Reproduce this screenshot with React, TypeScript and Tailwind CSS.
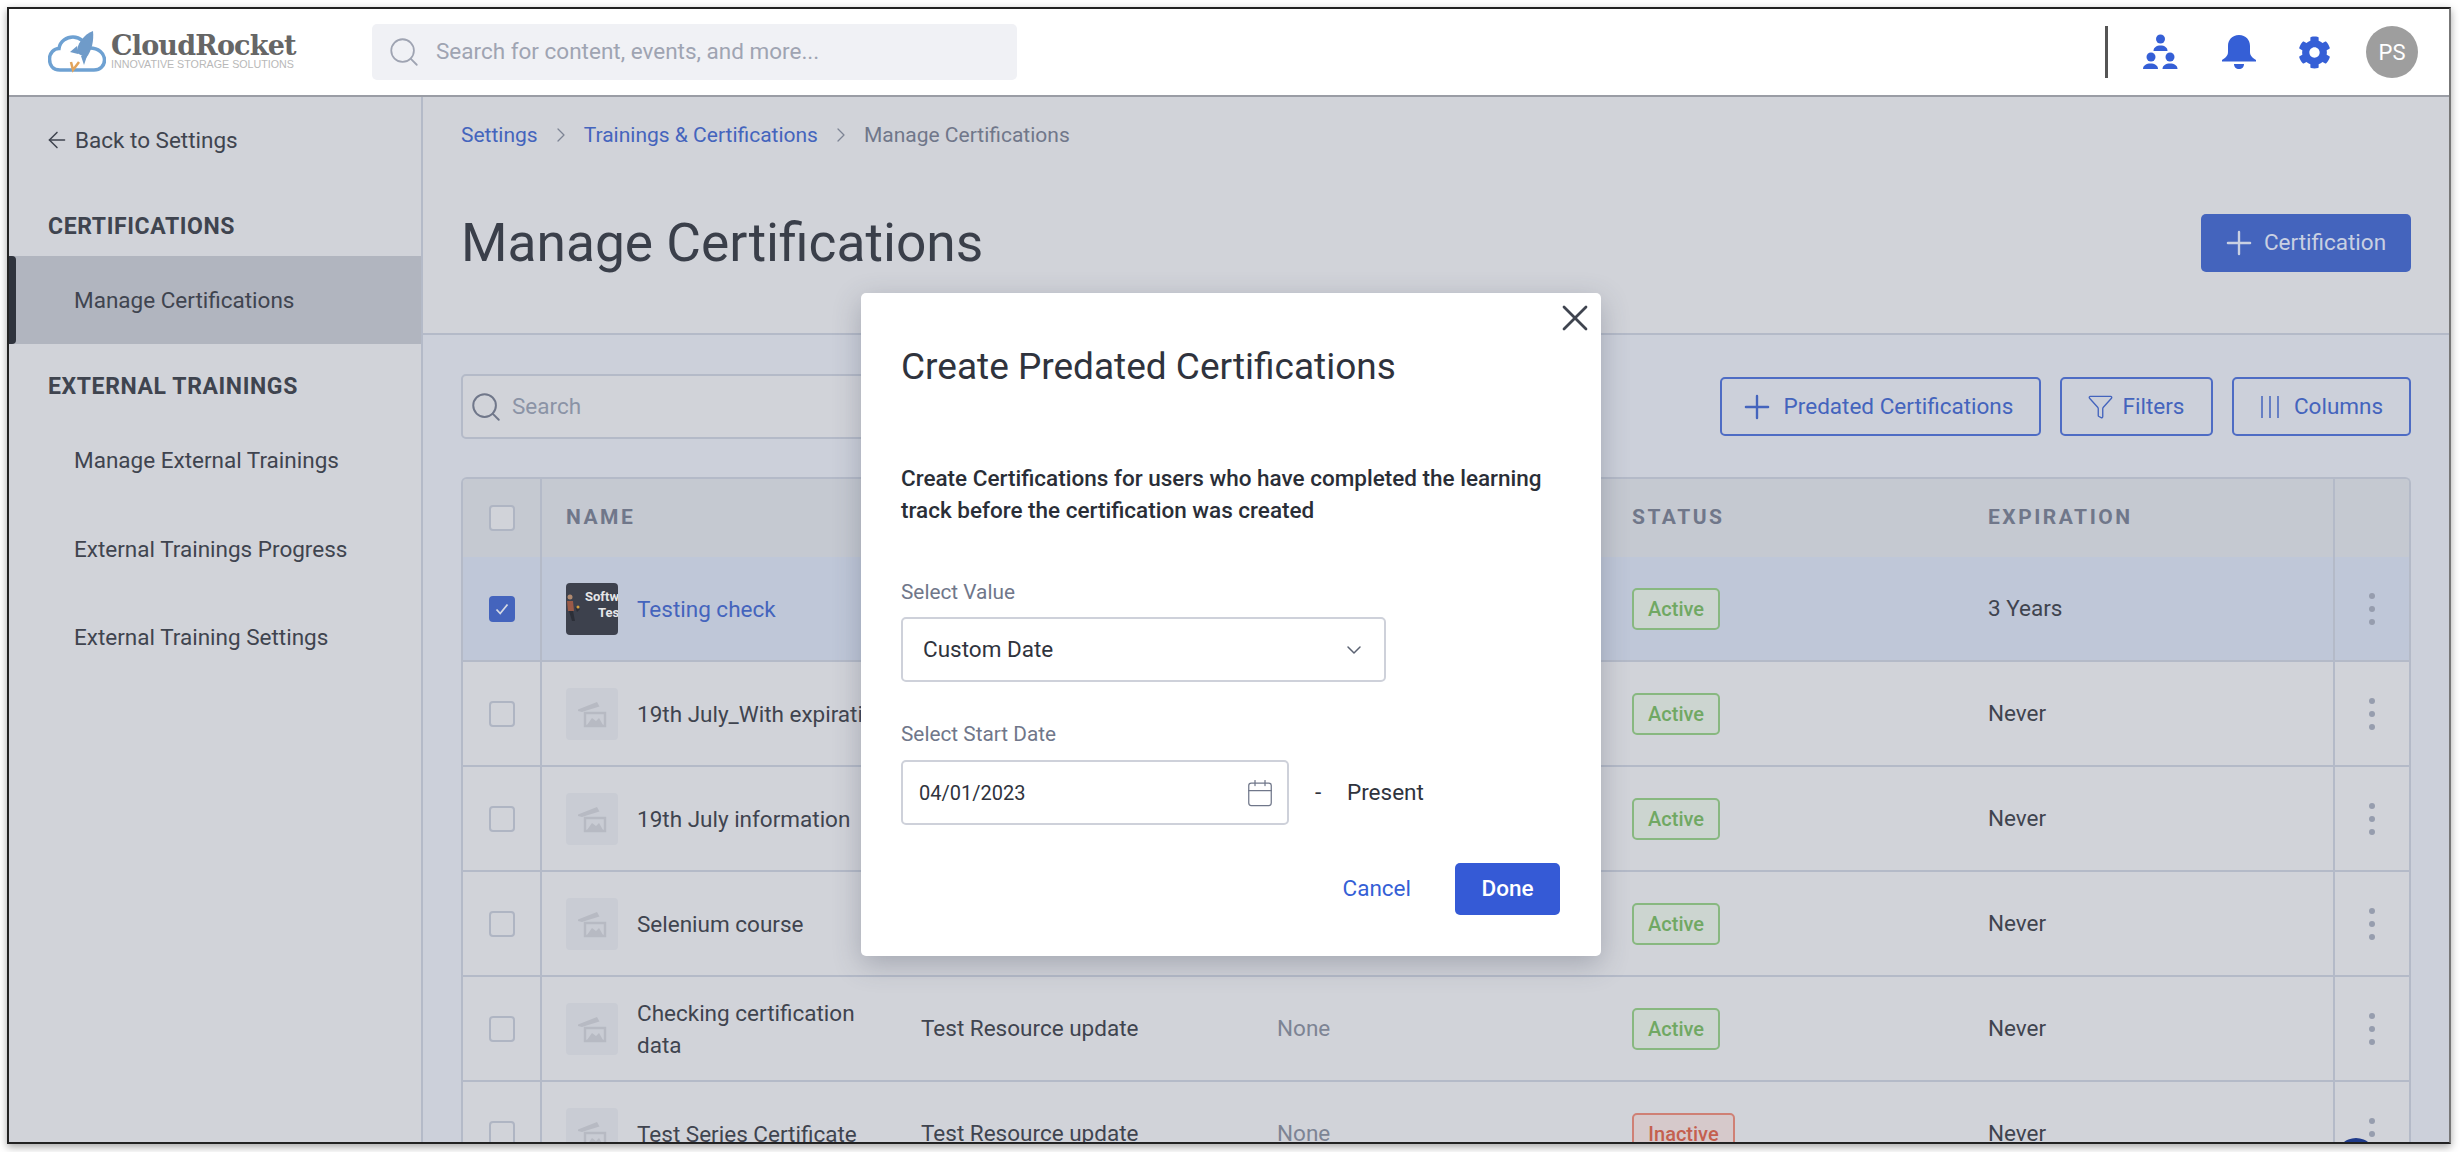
import { ArrowLeft, Calendar, ChevronDown, ChevronRight, Filter, Plus, Search, X } from 'lucide-react';
import { FaCog } from 'react-icons/fa';

const font = 'font-["Roboto",sans-serif]';

const OrgIcon = () => (
    <svg viewBox="0 0 36 36" className="h-[36px] w-[36px] fill-[#355fd6]">
        <circle cx="17.500" cy="5" r="4.500" />
        <path d="M10.500 17c0-3.600 3-5.500 7-5.500s7 1.900 7 5.500z" />
        <circle cx="8" cy="23" r="4.500" />
        <path d="M0 35c0-3.600 3.400-5.500 7.500-5.500s7.500 1.900 7.500 5.500z" />
        <circle cx="27" cy="23" r="4.500" />
        <path d="M19.500 35c0-3.600 3.400-5.500 7.500-5.500s7.500 1.900 7.500 5.500z" />
    </svg>
);

const BellIcon = () => (
    <svg viewBox="0 0 36 36" className="ml-[42px] h-[36px] w-[36px] fill-[#355fd6]">
        <path d="M18 1C11 1 7 6 7 12v6c0 4-3 6-6 8v1.500h34V26c-3-2-6-4-6-8v-6C29 6 25 1 18 1z" />
        <path d="M13 30h10c0 3-2 5-5 5s-5-2-5-5z" />
    </svg>
);

const Logo = () => (
    <div className="flex items-center gap-[5px]">
        <svg viewBox="8 5 58 44" className="h-[44px] w-[58px]">
            <path
                d="M20 45C12 45 9.500 39 9.500 34 9.500 28 14 23.500 19 23.500 20 16 27 12 33 12c4 0 7 1.500 10 4M50 23c8 0 14.500 5 14.500 12 0 6-4.500 10-10.500 10H20"
                fill="none"
                stroke="#6ea1d2"
                strokeWidth="3.500"
            />
            <path d="M53 6c-9 3-17 14-16 22l9 5c6-7 8-18 7-27z" fill="#6f9bc9" />
            <path d="M37 21l-7 6 8 2zM47 31l-3 9-3-9z" fill="#6f9bc9" />
            <path d="M31 37l2 8 6-8" fill="none" stroke="#e2a45b" strokeWidth="2.500" />
        </svg>
        <div className="flex w-[187px] flex-col">
            <span className='font-["DejaVu_Serif",serif] text-[27px] leading-[24px] font-bold tracking-[-0.8px] whitespace-nowrap text-[#666666]'>
                CloudRocket
            </span>
            <span className='font-["Liberation_Sans",sans-serif] text-[10.7px] leading-[12px] whitespace-nowrap text-[#b8b8b8]'>
                INNOVATIVE STORAGE SOLUTIONS
            </span>
        </div>
    </div>
);

const Thumb = () => (
    <div className="relative h-[52px] w-[52px] shrink-0 overflow-hidden rounded-[4px] bg-[#3d414d] text-[13px] leading-[15px] font-bold text-[#e6e6e8]">
        <span className="absolute top-[6px] left-[19px]">Software</span>
        <span className="absolute top-[22px] left-[32px]">Testing</span>
        <svg viewBox="0 0 16 30" className="absolute top-[10px] left-[0px] h-[30px] w-[16px]">
            <circle cx="4" cy="4" r="2.500" fill="#b08a70" />
            <path d="M1 8h6l1 10H2z" fill="#9a5a48" />
            <path d="M3 18h4l2 10H6zM9 14l5 2-3 3z" fill="#2c2f38" />
            <circle cx="12" cy="14" r="1.500" fill="#d0a040" />
        </svg>
    </div>
);

const PlaceholderThumb = () => (
    <div className="flex h-[52px] w-[52px] shrink-0 items-center justify-center rounded-[4px] bg-[#c9ccd4]">
        <svg viewBox="0 0 30 28" className="h-[28px] w-[30px]">
            <path d="M1 9.500 20 2l2.500 4.500-13 4-4.500 1.500L1 11z" fill="#b7bac3" />
            <path d="M8 13h20v13H8z" fill="none" stroke="#b7bac3" strokeWidth="2.400" />
            <path d="M10 25l5-7 4 3 3-3 4 7z" fill="#b7bac3" />
        </svg>
    </div>
);

const Checkbox = ({ checked = false }: { checked?: boolean }) =>
    checked ? (
        <div className="flex h-[26px] w-[26px] items-center justify-center rounded-[4px] bg-[#4464bd]">
            <svg viewBox="0 0 16 16" className="h-[16px] w-[16px] fill-none stroke-[#d5d9e4] stroke-[1.8]">
                <path d="M2.500 8.500 6.200 12.500 13.500 3.500" />
            </svg>
        </div>
    ) : (
        <div className="h-[26px] w-[26px] rounded-[4px] border-2 border-[#afb5c3] bg-[#d1d3d9]" />
    );

const StatusBadge = ({ status }: { status: string }) => (
    <span
        className={
            status === 'Active'
                ? 'flex h-[42px] w-[88px] items-center justify-center rounded-[5px] border-2 border-[#88b880] bg-[#ccd5d0] text-[20px] font-medium text-[#70a863]'
                : 'flex h-[42px] w-[103px] items-center justify-center rounded-[5px] border-2 border-[#cf8075] bg-[#d6c9cb] text-[20px] font-medium text-[#c4604f]'
        }
    >
        {status}
    </span>
);

const Dots = () => (
    <div className="flex flex-col gap-[7px]">
        <span className="h-[6px] w-[6px] rounded-full bg-[#969dae]" />
        <span className="h-[6px] w-[6px] rounded-full bg-[#969dae]" />
        <span className="h-[6px] w-[6px] rounded-full bg-[#969dae]" />
    </div>
);

interface Row {
    name: string;
    resource?: string;
    other?: string;
    status: string;
    expiration: string;
}

const rows: Row[] = [
    { name: 'Testing check', status: 'Active', expiration: '3 Years' },
    { name: '19th July_With expiration', status: 'Active', expiration: 'Never' },
    { name: '19th July information', status: 'Active', expiration: 'Never' },
    { name: 'Selenium course', status: 'Active', expiration: 'Never' },
    { name: 'Checking certification\ndata', resource: 'Test Resource update', other: 'None', status: 'Active', expiration: 'Never' },
    { name: 'Test Series Certificate', resource: 'Test Resource update', other: 'None', status: 'Inactive', expiration: 'Never' },
];

const gridCols = 'grid grid-cols-[79px_379px_356px_355px_356px_345px_1fr]';

const TableRow = ({ row, selected }: { row: Row; selected: boolean }) => (
    <div className={`${gridCols} h-[105px] shrink-0 border-b-2 border-[#b4bac8] ${selected ? 'bg-[#bfc7d8]' : 'bg-[#d1d3d9]'}`}>
        <div className="flex items-center justify-center border-r-2 border-[#b4bac8]">
            <Checkbox checked={selected} />
        </div>
        <div className="flex min-w-0 items-center gap-[19px] pl-[24px]">
            {selected ? <Thumb /> : <PlaceholderThumb />}
            <span className={`text-[22.5px] leading-[32px] whitespace-pre ${selected ? 'text-[#4464bd]' : 'text-[#3f444f]'}`}>
                {row.name}
            </span>
        </div>
        <div className="flex items-center text-[22.5px] whitespace-nowrap text-[#3f444f]">{row.resource}</div>
        <div className="flex items-center text-[22.5px] text-[#7d8494]">{row.other}</div>
        <div className="flex items-center">
            <StatusBadge status={row.status} />
        </div>
        <div className="flex items-center text-[22.5px] text-[#3f444f]">{row.expiration}</div>
        <div className="flex items-center justify-center border-l-2 border-[#b4bac8]">
            <Dots />
        </div>
    </div>
);

const OutlineButton = ({ icon, label, width, gap }: { icon: React.ReactNode; label: string; width: string; gap: string }) => (
    <button className={`flex h-[59px] ${width} ${gap} items-center justify-center rounded-[5px] border-2 border-[#4e6cc4] text-[22.5px] text-[#4464bd]`}>
        {icon}
        {label}
    </button>
);

const Sidebar = () => (
    <aside className="flex w-[414px] shrink-0 flex-col border-r-2 border-[#b4bac8] bg-[#d1d3d9] text-[22.5px] leading-[32px] text-[#3f444f]">
        <div className="mt-[27px] flex items-center gap-[5px] pl-[35px]">
            <ArrowLeft size={26} strokeWidth={1.4} />
            <span>Back to Settings</span>
        </div>
        <div className="mt-[56px] pl-[39px] text-[23px] leading-[30px] font-bold tracking-[0.6px]">CERTIFICATIONS</div>
        <div className="relative mt-[14px] flex h-[88px] items-center bg-[#b1b5bf] pl-[65px]">
            <span className="absolute top-0 left-0 h-full w-[7px] rounded-r-[4px] bg-[#2f333d]" />
            Manage Certifications
        </div>
        <div className="mt-[28px] pl-[39px] text-[23px] leading-[30px] font-bold tracking-[0.6px]">EXTERNAL TRAININGS</div>
        <div className="mt-[42px] flex flex-col gap-[56.5px] pl-[65px]">
            <span>Manage External Trainings</span>
            <span>External Trainings Progress</span>
            <span>External Training Settings</span>
        </div>
    </aside>
);

const Modal = () => (
    <div className="absolute top-[284px] left-[852px] flex h-[663px] w-[740px] flex-col rounded-[5px] bg-white pt-[50px] pr-[41px] pl-[40px] shadow-[0_8px_28px_rgba(60,65,85,0.3)]">
        <X size={44} strokeWidth={1.5} className="absolute top-[3px] right-[4px] text-[#3f444f]" />
        <h2 className="text-[37px] leading-[48px] font-normal text-[#2f333d]">Create Predated Certifications</h2>
        <p className="mt-[71px] text-[22.5px] leading-[32px] font-medium text-[#2a2e37]">
            Create Certifications for users who have completed the learning track before the certification was created
        </p>
        <label className="mt-[52px] text-[20.8px] leading-[28px] text-[#70778a]">Select Value</label>
        <div className="mt-[11px] flex h-[65px] w-[485px] items-center justify-between rounded-[5px] border-2 border-[#ced1da] pr-[18px] pl-[20px] text-[22.5px] text-[#2f333d]">
            Custom Date
            <ChevronDown size={24} strokeWidth={1.5} className="text-[#5b6272]" />
        </div>
        <label className="mt-[38px] text-[20.8px] leading-[28px] text-[#70778a]">Select Start Date</label>
        <div className="mt-[12px] flex items-center text-[22.5px] text-[#2f333d]">
            <div className="flex h-[65px] w-[388px] items-center justify-between rounded-[5px] border-2 border-[#ced1da] pr-[12px] pl-[16px] text-[20px]">
                04/01/2023
                <Calendar size={30} strokeWidth={1} className="text-[#70778a]" />
            </div>
            <span className="ml-[26px] w-[32px]">-</span>
            <span>Present</span>
        </div>
        <div className="mt-[38px] flex items-center justify-end gap-[44px]">
            <span className="text-[22.5px] text-[#355fd6]">Cancel</span>
            <button className="flex h-[52px] w-[105px] items-center justify-center rounded-[5px] bg-[#355ad6] text-[22.5px] font-medium text-white">
                Done
            </button>
        </div>
    </div>
);

export default function App() {
    return (
        <div className={`h-[1152px] w-[2460px] overflow-hidden bg-white pt-[7px] pl-[7px] ${font}`}>
            <div className="relative flex h-[1137px] w-[2444px] flex-col overflow-hidden border-2 border-t-[#222222] border-r-[#777777] border-b-[#222222] border-l-[#222222] shadow-[0_3px_8px_rgba(0,0,0,0.35)]">
                <header className="flex h-[88px] shrink-0 items-center border-b-2 border-[#9a9da5] bg-white pr-[31px] pl-[39px] shadow-[0_1px_3px_rgba(0,0,0,0.2)]">
                    <Logo />
                    <div className="ml-[74px] flex h-[56px] w-[645px] items-center gap-[15px] rounded-[5px] bg-[#f0f1f5] pl-[15px] text-[22.5px] text-[#9fa4b2]">
                        <Search size={34} strokeWidth={1.25} />
                        Search for content, events, and more...
                    </div>
                    <div className="ml-auto h-[52px] w-[3px] bg-[#555555]" />
                    <div className="ml-[35px]">
                        <OrgIcon />
                    </div>
                    <BellIcon />
                    <FaCog size={33} className="ml-[41px] text-[#355fd6]" />
                    <div className="ml-[35px] flex h-[52px] w-[52px] items-center justify-center rounded-full bg-[#9e9e9e] text-[22px] text-white">
                        PS
                    </div>
                </header>
                <div className="flex min-h-0 flex-1">
                    <Sidebar />
                    <main className="flex min-w-0 flex-1 flex-col bg-[#ccd0da]">
                        <section className="h-[238px] shrink-0 border-b-2 border-[#b4bac8] bg-[#d1d3d9] px-[38px]">
                            <div className="mt-[24px] flex items-center gap-[11px] text-[21px] leading-[28px]">
                                <span className="text-[#4464bd]">Settings</span>
                                <ChevronRight size={24} strokeWidth={1.25} className="text-[#7d8494]" />
                                <span className="text-[#4464bd]">Trainings &amp; Certifications</span>
                                <ChevronRight size={24} strokeWidth={1.25} className="text-[#7d8494]" />
                                <span className="text-[#70778a]">Manage Certifications</span>
                            </div>
                            <div className="mt-[62px] flex items-center justify-between">
                                <h1 className="text-[53.3px] leading-[64px] font-normal text-[#3a3f4a]">Manage Certifications</h1>
                                <button className="flex h-[58px] w-[210px] items-center justify-center gap-[6px] rounded-[5px] bg-[#4464bd] text-[22.5px] text-[#c9d0e2]">
                                    <Plus size={38} strokeWidth={1.5} className="-ml-[6px]" />
                                    Certification
                                </button>
                            </div>
                        </section>
                        <section className="flex min-h-0 flex-1 flex-col px-[38px]">
                            <div className="mt-[39px] flex items-center justify-between">
                                <div className="flex h-[65px] w-[800px] items-center gap-[9px] rounded-[5px] border-2 border-[#b4bac8] bg-[#d1d3d9] pl-[6px] text-[22.5px] text-[#8b93a6]">
                                    <Search size={34} strokeWidth={1.4} className="text-[#70778a]" />
                                    Search
                                </div>
                                <div className="flex items-center gap-[19px]">
                                    <OutlineButton
                                        width="w-[321px]"
                                        gap="gap-[8px]"
                                        label="Predated Certifications"
                                        icon={<Plus size={38} strokeWidth={1.5} className="-ml-[10px]" />}
                                    />
                                    <OutlineButton
                                        width="w-[153px]"
                                        gap="gap-[9px]"
                                        label="Filters"
                                        icon={<Filter size={27} strokeWidth={1.2} className="-ml-[2px]" />}
                                    />
                                    <OutlineButton
                                        width="w-[179px]"
                                        gap="gap-[14px]"
                                        label="Columns"
                                        icon={
                                            <svg viewBox="0 0 20 22" className="h-[22px] w-[20px] stroke-[#4464bd] stroke-[1.5]">
                                                <path d="M2 0v22M10 0v22M18 0v22" />
                                            </svg>
                                        }
                                    />
                                </div>
                            </div>
                            <div className="mt-[38px] flex min-h-0 flex-1 flex-col overflow-hidden rounded-t-[6px] border-x-2 border-t-2 border-[#b4bac8]">
                                <div className={`${gridCols} h-[78px] shrink-0 bg-[#c5c9d1] text-[21px] font-bold tracking-[2.5px] text-[#70778a]`}>
                                    <div className="flex items-center justify-center border-r-2 border-[#b4bac8]">
                                        <Checkbox />
                                    </div>
                                    <div className="flex items-center pl-[24px]">NAME</div>
                                    <div />
                                    <div />
                                    <div className="flex items-center">STATUS</div>
                                    <div className="flex items-center">EXPIRATION</div>
                                    <div className="border-l-2 border-[#b4bac8]" />
                                </div>
                                {rows.map((row, i) => (
                                    <TableRow key={row.name} row={row} selected={i === 0} />
                                ))}
                            </div>
                        </section>
                    </main>
                </div>
                <Modal />
                <span className="absolute top-[1129px] left-[2327px] h-[40px] w-[40px] rounded-full bg-[#1e3a8a]" />
            </div>
        </div>
    );
}
